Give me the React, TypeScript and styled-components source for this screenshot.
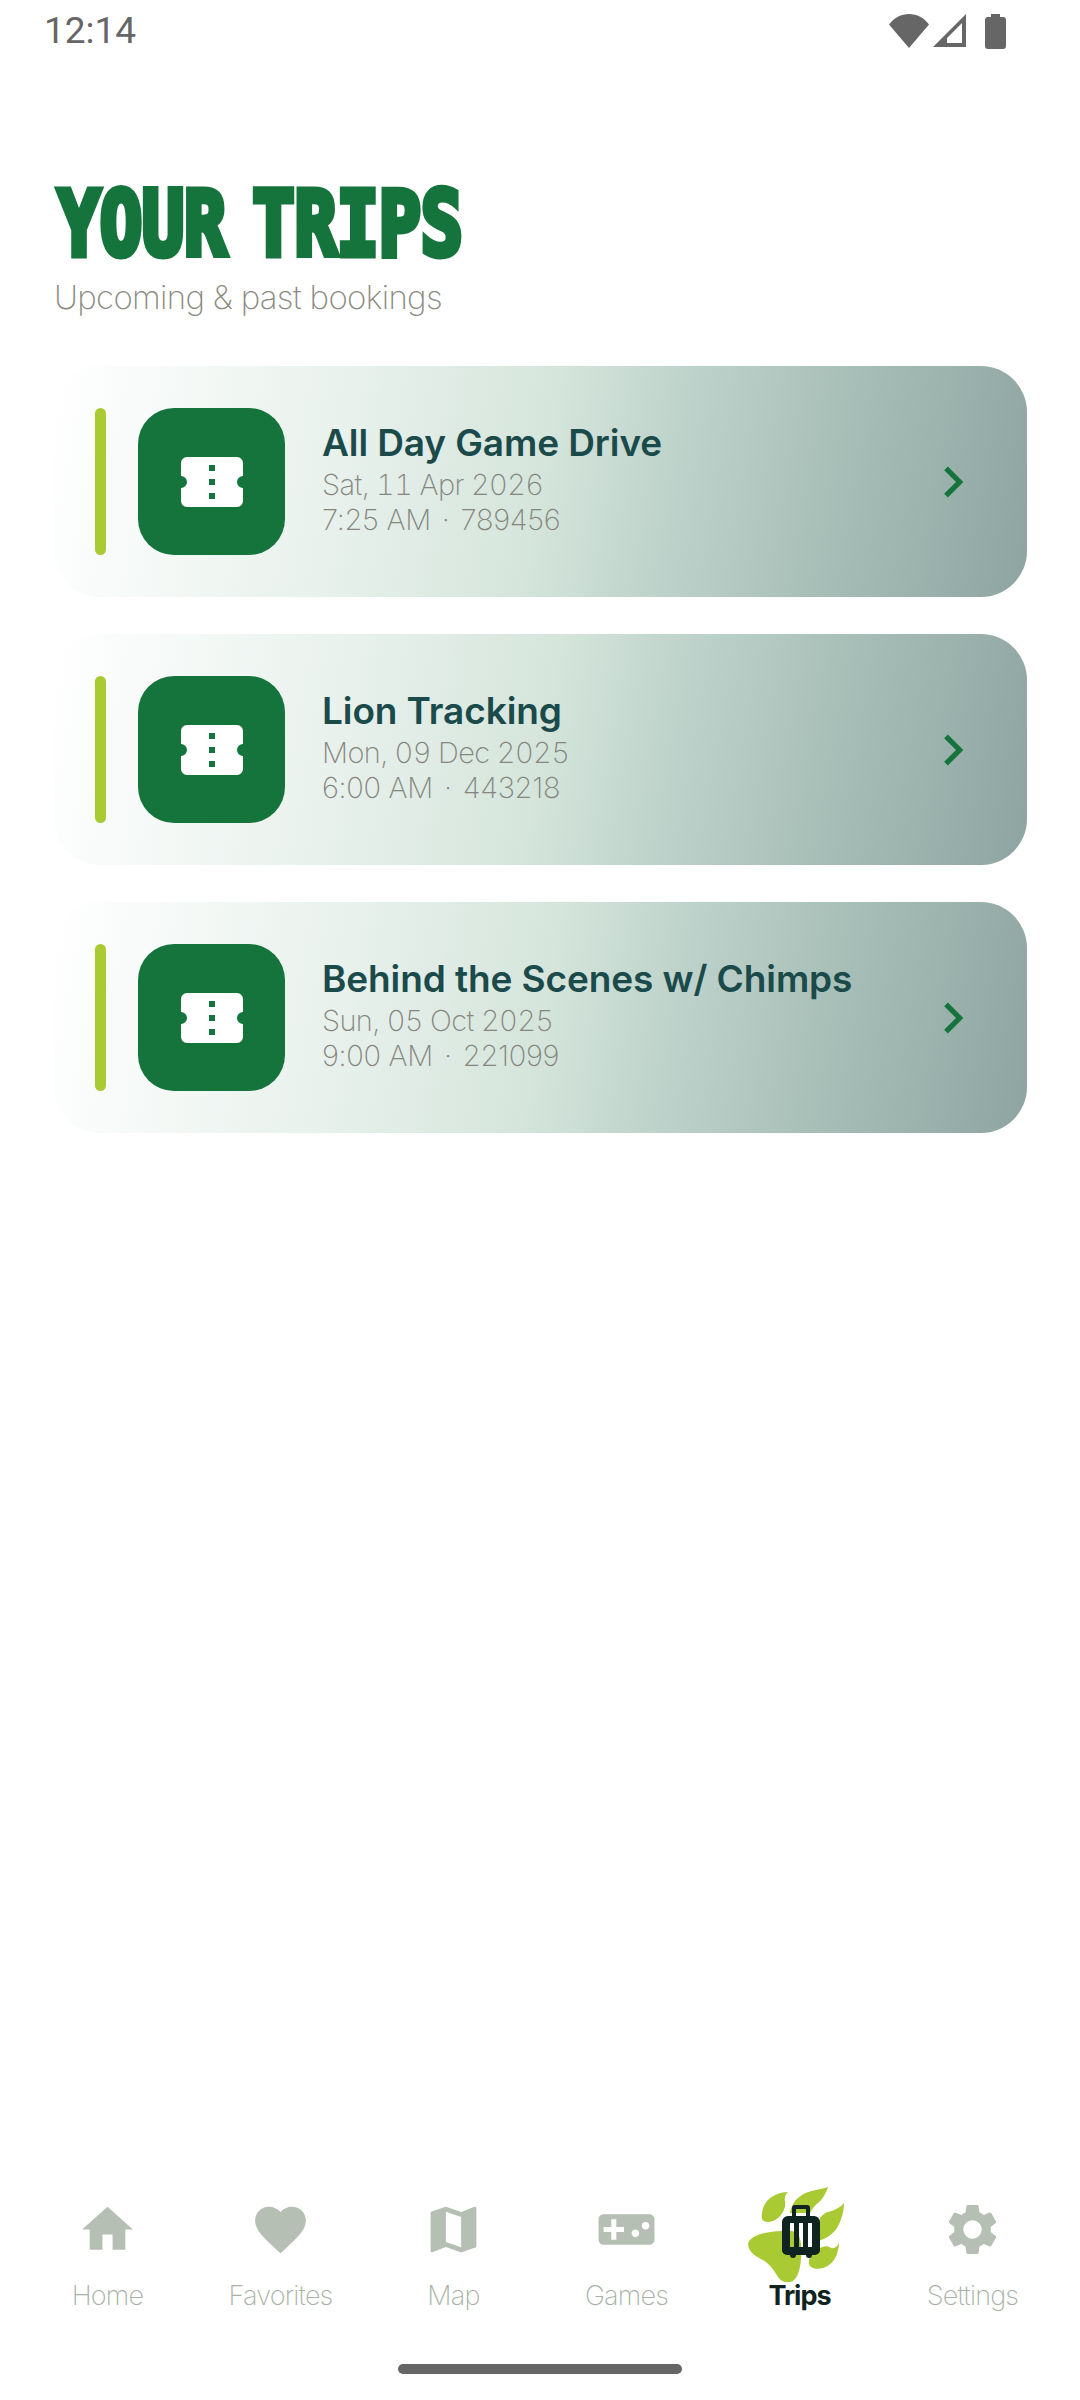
import { MdChevronRight, MdFavorite, MdHome, MdMap, MdSettings, MdVideogameAsset } from "react-icons/md";
import styled, { createGlobalStyle } from "styled-components";

const GlobalStyle = createGlobalStyle`
  html, body {
    margin: 0;
    padding: 0;
    background: #fff;
  }
  * {
    box-sizing: border-box;
  }
`;

const trips = [
  { title: "All Day Game Drive", date: "Sat, 11 Apr 2026", time: "7:25 AM", code: "789456" },
  { title: "Lion Tracking", date: "Mon, 09 Dec 2025", time: "6:00 AM", code: "443218" },
  { title: "Behind the Scenes w/ Chimps", date: "Sun, 05 Oct 2025", time: "9:00 AM", code: "221099" },
];

const tabs = [
  { label: "Home", Icon: MdHome },
  { label: "Favorites", Icon: MdFavorite },
  { label: "Map", Icon: MdMap },
  { label: "Games", Icon: MdVideogameAsset },
  { label: "Trips", Icon: null },
  { label: "Settings", Icon: MdSettings },
];

const TicketIcon = () => (
  <svg width="62" height="50" viewBox="0 0 62 50">
    <path
      fill="#fff"
      fillRule="evenodd"
      d="M6 0H56a6 6 0 0 1 6 6V19a6 6 0 0 0 0 12V44a6 6 0 0 1-6 6H6a6 6 0 0 1-6-6V31a6 6 0 0 0 0-12V6a6 6 0 0 1 6-6ZM28 8v6h6V8ZM28 22v6h6V22ZM28 36v6h6V36Z"
    />
  </svg>
);

const PawIcon = () => (
  <svg width="96" height="96" viewBox="0 0 96 96">
    <g fill="#a9ca33">
      <path d="M0 57C1 50 12 46 26 44.5C34 43.5 44 43 48 45C53 49 54 60 53 72C52 84 49 92 44 94.5C39 96 33 95 30 90C27 85 24 80 18 75C11 70 1 68 0 57Z" />
      <path d="M40 5C33 5 25 8 20 13C15 18 13 26 14 32C16 36 24 36 30 31C36 26 38 19 37 14C36 10 38 7 40 5Z" />
      <path d="M80 0C72 3 62 3 54 8C47 12 43 19 42 26L62 26C64 22 66 19 70 16C75 12 78 6 80 0Z" />
      <path d="M96 16C93 20 88 22 84 24C78 25 74 28 72 31L70 54C78 52 85 47 89 41C93 34 96 25 96 16Z" />
      <path d="M91 56C89 60 86 62 83 61C80 58 75 59 70 62C64 65 60 72 61 77C62 81 68 83 75 81C82 79 87 73 89 67C90 63 91 60 91 56Z" />
    </g>
  </svg>
);

const SuitcaseIcon = () => (
  <svg width="38" height="53" viewBox="0 0 38 53">
    <path
      fill="#0f2320"
      fillRule="evenodd"
      d="M13 0H25a3 3 0 0 1 3 3V11H32a6 6 0 0 1 6 6V45a5 5 0 0 1-5 5H30a3 3 0 0 1-6 0H14a3 3 0 0 1-6 0H5a5 5 0 0 1-5-5V17a6 6 0 0 1 6-6H10V3a3 3 0 0 1 3-3ZM14 4V11H24V4ZM8 18V42H12V18ZM17 18V42H21V18ZM26 18V42H30V18Z"
    />
  </svg>
);

const App = () => {
  return (
    <Screen>
      <GlobalStyle />
      <StatusBar>
        <Clock>12:14</Clock>
        <StatusIcons>
          <svg width="40" height="34" viewBox="0 0 40 34">
            <path fill="#666" d="M0 10.5C5 4 12 0 20 0s15 4 20 10.5L20 34Z" />
          </svg>
          <svg width="33" height="34" viewBox="0 0 33 34">
            <path fill="#666" fillRule="evenodd" d="M33 0V33H0ZM29 9 14 24V29H29Z" />
          </svg>
          <Battery width="21" height="35" viewBox="0 0 21 35">
            <path fill="#666" d="M6 0H15V3H18a3 3 0 0 1 3 3V32a3 3 0 0 1-3 3H3a3 3 0 0 1-3-3V6a3 3 0 0 1 3-3H6Z" />
          </Battery>
        </StatusIcons>
      </StatusBar>

      <Main>
        <Heading>YOUR TRIPS</Heading>
        <Subheading>Upcoming &amp; past bookings</Subheading>
        <TripList>
          {trips.map((trip) => (
            <TripCard key={trip.code}>
              <Accent />
              <IconTile>
                <TicketIcon />
              </IconTile>
              <TripInfo>
                <TripTitle>{trip.title}</TripTitle>
                <TripDate>{trip.date}</TripDate>
                <TripMeta>
                  {trip.time}
                  <MetaDot>·</MetaDot>
                  {trip.code}
                </TripMeta>
              </TripInfo>
              <MdChevronRight size={62} color="#14743c" />
            </TripCard>
          ))}
        </TripList>
      </Main>

      <BottomNav>
        {tabs.map(({ label, Icon }) => (
          <Tab key={label}>
            <TabIcon>
              {Icon ? (
                <Icon size={61} color="#b5bfb4" />
              ) : (
                <>
                  <PawBadge>
                    <PawIcon />
                  </PawBadge>
                  <SuitcaseBadge>
                    <SuitcaseIcon />
                  </SuitcaseBadge>
                </>
              )}
            </TabIcon>
            <TabLabel $active={!Icon}>{label}</TabLabel>
          </Tab>
        ))}
      </BottomNav>
      <HomeHandle />
    </Screen>
  );
};

const Screen = styled.div`
  width: 1080px;
  height: 2400px;
  display: flex;
  flex-direction: column;
  background: #fff;
  overflow: hidden;
  font-family: Inter, "Liberation Sans", sans-serif;
`;

const StatusBar = styled.div`
  height: 62px;
  padding: 10px 74px 0 44px;
  display: flex;
  align-items: flex-start;
  justify-content: space-between;
`;

const Clock = styled.div`
  font-family: Roboto, sans-serif;
  font-size: 37px;
  line-height: 42px;
  color: #666;
`;

const StatusIcons = styled.div`
  display: flex;
  align-items: flex-start;
  gap: 4px;
  padding-top: 4px;
`;

const Battery = styled.svg`
  margin-left: 15px;
`;

const Main = styled.main`
  flex: 1;
  padding: 125px 53px 0 54px;
`;

const Heading = styled.h1`
  margin: 0 0 0 4px;
  height: 74px;
  font-family: "DejaVu Sans Mono", monospace;
  font-size: 89px;
  line-height: 74px;
  font-weight: 700;
  word-spacing: -20px;
  color: #14743c;
  -webkit-text-stroke: 7px #14743c;
  white-space: nowrap;
  transform: scaleX(0.785);
  transform-origin: left center;
`;

const Subheading = styled.p`
  margin: 15px 0 0;
  font-size: 33px;
  line-height: 42px;
  font-weight: 200;
  letter-spacing: -0.7px;
  color: #8b8b81;
`;

const TripList = styled.div`
  margin-top: 48px;
  display: flex;
  flex-direction: column;
  gap: 37px;
`;

const TripCard = styled.div`
  height: 231px;
  padding: 0 43px 0 41px;
  display: flex;
  align-items: center;
  border-radius: 46px;
  background: linear-gradient(100deg, #ffffff 0%, #e8f1ec 30%, #d5e5dc 50%, #bcd1c9 64%, #aac1ba 77%, #8da4a1 100%);
`;

const Accent = styled.div`
  width: 11px;
  height: 147px;
  border-radius: 6px;
  background: #a9ca33;
`;

const IconTile = styled.div`
  width: 147px;
  height: 147px;
  margin-left: 32px;
  border-radius: 36px;
  background: #14743c;
  display: flex;
  align-items: center;
  justify-content: center;
`;

const TripInfo = styled.div`
  flex: 1;
  margin-left: 37px;
  padding-bottom: 5px;
  display: flex;
  flex-direction: column;
`;

const TripTitle = styled.div`
  margin-bottom: 2px;
  font-size: 37px;
  line-height: 44px;
  font-weight: 600;
  letter-spacing: -0.1px;
  color: #1b4a4a;
`;

const TripMeta = styled.div`
  font-size: 29px;
  line-height: 35px;
  font-weight: 250;
  letter-spacing: -0.3px;
  color: #85867d;
`;

const TripDate = styled(TripMeta)`
  letter-spacing: -0.6px;
  font-variant-numeric: tabular-nums;
`;

const MetaDot = styled.span`
  margin: 0 11px;
`;

const BottomNav = styled.nav`
  height: 165px;
  padding: 0 21px;
  display: grid;
  grid-template-columns: repeat(6, 173px);
`;

const Tab = styled.div`
  display: flex;
  flex-direction: column;
  align-items: center;
`;

const TabIcon = styled.div`
  position: relative;
  width: 61px;
  height: 61px;
`;

const PawBadge = styled.div`
  position: absolute;
  left: -21px;
  top: -12px;
`;

const SuitcaseBadge = styled.div`
  position: absolute;
  left: 13px;
  top: 6px;
`;

const TabLabel = styled.div<{ $active: boolean }>`
  margin-top: 19px;
  font-size: 27px;
  line-height: 34px;
  font-weight: ${(p) => (p.$active ? 700 : 200)};
  letter-spacing: ${(p) => (p.$active ? "-1px" : "-0.8px")};
  color: ${(p) => (p.$active ? "#0f2320" : "#a7b2a6")};
`;

const HomeHandle = styled.div`
  flex: none;
  width: 284px;
  height: 10px;
  margin: 0 auto 26px;
  border-radius: 5px;
  background: #666;
`;

export default App;
